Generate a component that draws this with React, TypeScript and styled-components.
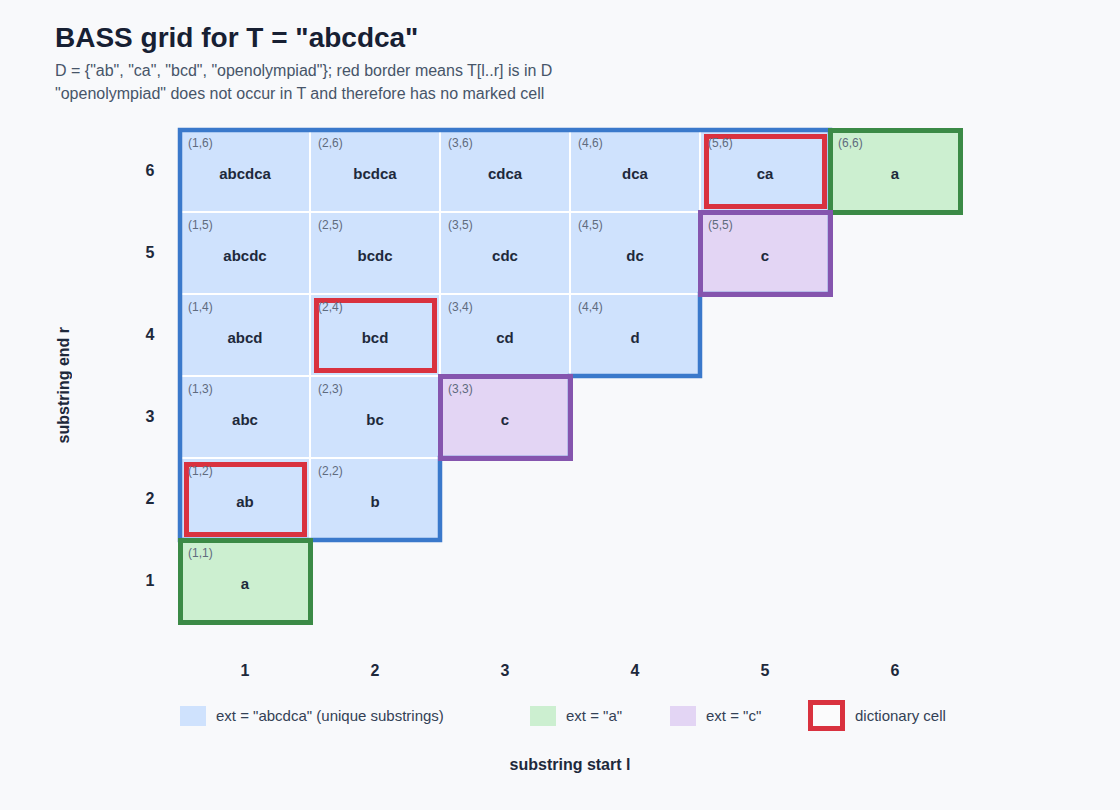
import React from 'react';
import styled, { createGlobalStyle } from 'styled-components';

const T = 'abcdca';
const N = T.length;
const CELL_W = 130;
const CELL_H = 82;
const DICT = ['ab', 'ca', 'bcd', 'openolympiad'];

type Kind = 'blue' | 'green' | 'purple';

const FILL: Record<Kind, string> = {
  blue: '#cfe2fd',
  green: '#ccefd0',
  purple: '#e3d5f4',
};

const LINE: Record<Kind, string> = {
  blue: '#3a79cb',
  green: '#3b8a46',
  purple: '#8555ae',
};

const RED = '#d9323f';

// single letters that repeat get their own ext, everything else is unique
const kindOf = (l: number, r: number): Kind => {
  if (l !== r) return 'blue';
  const ch = T[l - 1];
  if (ch === 'a') return 'green';
  if (ch === 'c') return 'purple';
  return 'blue';
};

const cells: { l: number; r: number; sub: string }[] = [];
for (let r = N; r >= 1; r--) {
  for (let l = 1; l <= r; l++) {
    cells.push({ l, r, sub: T.slice(l - 1, r) });
  }
}

// staircase outline of the blue region, in grid pixels
const bluePoints = [
  [0, 0],
  [5 * CELL_W, 0],
  [5 * CELL_W, 2 * CELL_H],
  [4 * CELL_W, 2 * CELL_H],
  [4 * CELL_W, 3 * CELL_H],
  [3 * CELL_W, 3 * CELL_H],
  [3 * CELL_W, 4 * CELL_H],
  [2 * CELL_W, 4 * CELL_H],
  [2 * CELL_W, 5 * CELL_H],
  [0, 5 * CELL_H],
]
  .map((p) => p.join(','))
  .join(' ');

const App: React.FC = () => {
  return (
    <Page>
      <GlobalStyle />
      <Title>BASS grid for T = "abcdca"</Title>
      <Subtitle>
        D = {'{'}"ab", "ca", "bcd", "openolympiad"{'}'}; red border means T[l..r] is in D
        <br />
        "openolympiad" does not occur in T and therefore has no marked cell
      </Subtitle>

      <Chart>
        <YTitle>substring end r</YTitle>
        <RowLabels>
          {Array.from({ length: N }, (_, i) => (
            <AxisNum key={i}>{N - i}</AxisNum>
          ))}
        </RowLabels>
        <Grid>
          {cells.map(({ l, r, sub }) => (
            <Cell
              key={`${l}-${r}`}
              $l={l}
              $r={r}
              $kind={kindOf(l, r)}
              $dict={DICT.includes(sub)}
            >
              <Coord>({l},{r})</Coord>
              <Sub>{sub}</Sub>
            </Cell>
          ))}
          <Outline viewBox={`0 0 ${N * CELL_W} ${N * CELL_H}`}>
            <polygon
              points={bluePoints}
              fill="none"
              stroke={LINE.blue}
              strokeWidth={4.5}
            />
          </Outline>
        </Grid>

        <ColLabels>
          {Array.from({ length: N }, (_, i) => (
            <AxisNum key={i}>{i + 1}</AxisNum>
          ))}
        </ColLabels>

        <Legend>
          <LegendItem>
            <Swatch $color={FILL.blue} />
            ext = "abcdca" (unique substrings)
          </LegendItem>
          <LegendItem>
            <Swatch $color={FILL.green} />
            ext = "a"
          </LegendItem>
          <LegendItem>
            <Swatch $color={FILL.purple} />
            ext = "c"
          </LegendItem>
          <LegendItem>
            <DictSwatch />
            dictionary cell
          </LegendItem>
        </Legend>

        <XTitle>substring start l</XTitle>
      </Chart>
    </Page>
  );
};

export default App;

const GlobalStyle = createGlobalStyle`
  html, body {
    margin: 0;
    background: #f8f9fb;
  }
  body {
    font-family: "Liberation Sans", Arial, sans-serif;
    color: #1e293b;
  }
`;

const Page = styled.div`
  width: 1120px;
  height: 810px;
  box-sizing: border-box;
  padding: 22px 55px 0;
  background: #f8f9fb;
`;

const Title = styled.h1`
  margin: 0;
  font-size: 28px;
  line-height: 32px;
  font-weight: 700;
  color: #172033;
`;

const Subtitle = styled.p`
  margin: 5px 0 0;
  font-size: 16px;
  line-height: 23px;
  color: #475569;
`;

const Chart = styled.div`
  display: grid;
  grid-template-columns: 65px 60px ${N * CELL_W}px;
  grid-template-rows: ${N * CELL_H}px auto auto auto;
  margin-top: 25px;
`;

const YTitle = styled.div`
  grid-column: 1;
  grid-row: 1;
  align-self: center;
  justify-self: start;
  margin-top: 18px;
  writing-mode: vertical-rl;
  transform: rotate(180deg);
  font-size: 16px;
  font-weight: 700;
  line-height: 17px;
  color: #1e293b;
`;

const RowLabels = styled.div`
  grid-column: 2;
  grid-row: 1;
  display: grid;
  grid-template-rows: repeat(${N}, ${CELL_H}px);
`;

const AxisNum = styled.div`
  display: flex;
  align-items: center;
  justify-content: center;
  font-size: 16px;
  font-weight: 700;
  line-height: 20px;
  color: #1e293b;
`;

const Grid = styled.div`
  grid-column: 3;
  grid-row: 1;
  position: relative;
  display: grid;
  grid-template-columns: repeat(${N}, ${CELL_W}px);
  grid-template-rows: repeat(${N}, ${CELL_H}px);
`;

const Cell = styled.div<{ $l: number; $r: number; $kind: Kind; $dict: boolean }>`
  grid-column: ${(p) => p.$l};
  grid-row: ${(p) => N + 1 - p.$r};
  position: relative;
  display: grid;
  background: ${(p) => FILL[p.$kind]};
  box-shadow: inset 0 0 0 1px #ffffff;

  ${(p) =>
    p.$kind !== 'blue' &&
    `
    &::after {
      content: '';
      position: absolute;
      inset: -2.5px;
      border: 5px solid ${LINE[p.$kind]};
      z-index: 2;
      pointer-events: none;
    }
  `}

  ${(p) =>
    p.$dict &&
    `
    &::before {
      content: '';
      position: absolute;
      inset: 3.5px;
      border: 5px solid ${RED};
      z-index: 2;
      pointer-events: none;
    }
  `}
`;

const Coord = styled.span`
  grid-area: 1 / 1;
  align-self: start;
  justify-self: start;
  margin: 6px 0 0 8px;
  font-size: 12px;
  line-height: 14px;
  color: #5f6b7e;
  position: relative;
  z-index: 3;
`;

const Sub = styled.span`
  grid-area: 1 / 1;
  align-self: center;
  justify-self: center;
  padding-top: 4px;
  font-size: 15px;
  font-weight: 700;
  color: #1e293b;
`;

const Outline = styled.svg`
  position: absolute;
  left: 0;
  top: 0;
  width: ${N * CELL_W}px;
  height: ${N * CELL_H}px;
  overflow: visible;
  z-index: 1;
  pointer-events: none;
`;

const ColLabels = styled.div`
  grid-column: 3;
  grid-row: 2;
  display: grid;
  grid-template-columns: repeat(${N}, ${CELL_W}px);
  margin-top: 39px;
`;

const Legend = styled.div`
  grid-column: 3;
  grid-row: 3;
  display: grid;
  grid-template-columns: 350px 140px 138px auto;
  align-items: center;
  height: 31px;
  margin-top: 19px;
`;

const LegendItem = styled.div`
  display: flex;
  align-items: center;
  gap: 10px;
  font-size: 15px;
  color: #334155;
`;

const Swatch = styled.span<{ $color: string }>`
  width: 26px;
  height: 20px;
  background: ${(p) => p.$color};
`;

const DictSwatch = styled.span`
  width: 37px;
  height: 31px;
  box-sizing: border-box;
  border: 5px solid ${RED};
  background: #fbfbfc;
`;

const XTitle = styled.div`
  grid-column: 3;
  grid-row: 4;
  text-align: center;
  margin-top: 24px;
  font-size: 16px;
  font-weight: 700;
  line-height: 20px;
  color: #1e293b;
`;
